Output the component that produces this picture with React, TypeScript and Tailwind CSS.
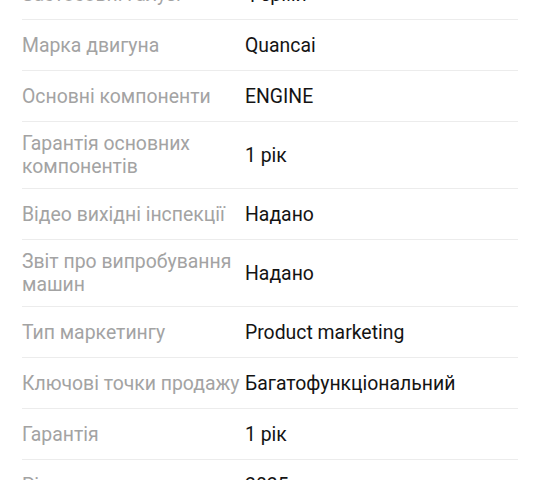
import React from "react";

const rows: { label: string; value: string }[] = [
  { label: "Застосовні галузі", value: "Ферми" },
  { label: "Марка двигуна", value: "Quancai" },
  { label: "Основні компоненти", value: "ENGINE" },
  { label: "Гарантія основних компонентів", value: "1 рік" },
  { label: "Відео вихідні інспекції", value: "Надано" },
  { label: "Звіт про випробування машин", value: "Надано" },
  { label: "Тип маркетингу", value: "Product marketing" },
  { label: "Ключові точки продажу", value: "Багатофункціональний" },
  { label: "Гарантія", value: "1 рік" },
  { label: "Рік", value: "2025" },
];

export default function App() {
  return (
    <div className="h-[480px] w-[540px] overflow-hidden bg-white font-['Roboto',sans-serif]">
      <div className="mt-[-31px] px-[22px]">
        {rows.map((r) => (
          <div
            key={r.label}
            className="flex min-h-[51px] items-center border-b border-[#ececec] py-[10px] text-[19.4px] leading-[23px]"
          >
            <div className="w-[223px] shrink-0 text-[#a3a3a3]">{r.label}</div>
            <div className="text-[#141414]">{r.value}</div>
          </div>
        ))}
      </div>
    </div>
  );
}
